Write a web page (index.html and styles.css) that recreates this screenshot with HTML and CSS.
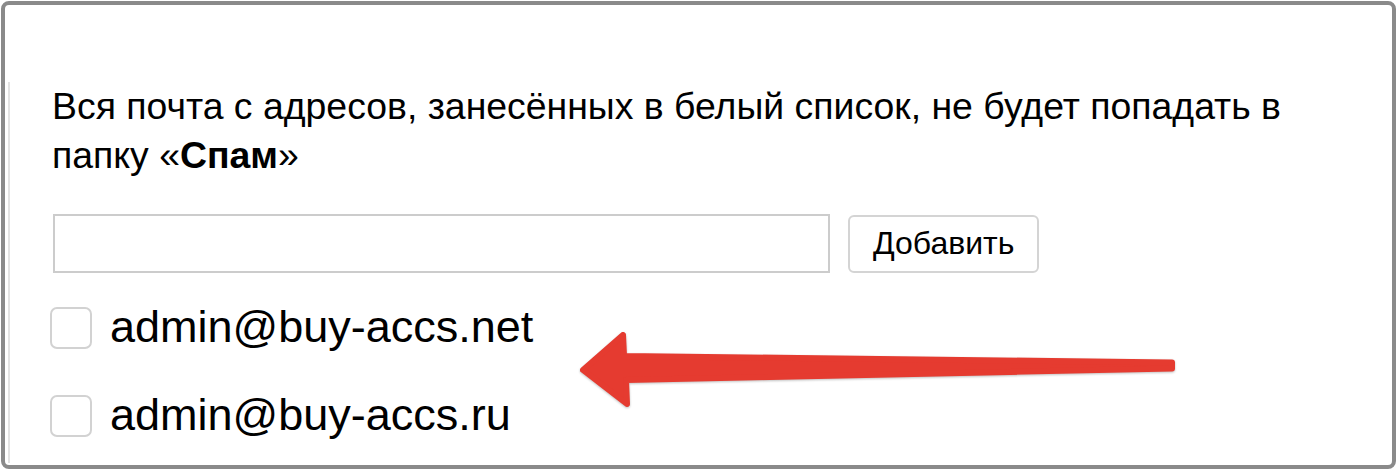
FILE: index.html
```html
<!DOCTYPE html>
<html lang="ru">
<head>
<meta charset="utf-8">
<title>Белый список</title>
<link rel="stylesheet" href="styles.css">
</head>
<body>
<div class="frame">
  <div class="panel">
    <p class="intro">Вся почта с адресов, занесённых в белый список, не будет попадать в папку «<b>Спам</b>»</p>
    <div class="add-form">
      <input class="addr-input" type="text" aria-label="Адрес">
      <button class="add-btn" type="button">Добавить</button>
    </div>
    <ul class="list">
      <li class="row"><span class="check"></span><span class="email">admin@buy-accs.net</span></li>
      <li class="row"><span class="check"></span><span class="email">admin@buy-accs.ru</span></li>
    </ul>
  </div>
</div>
<svg class="arrow" width="1399" height="472" viewBox="0 0 1399 472" aria-hidden="true">
  <polygon points="583,370 623,335 624,356 1172,362.5 1172,368.5 626,380 627,404" fill="#e53b30" stroke="#e53b30" stroke-width="6" stroke-linejoin="round"/>
</svg>
</body>
</html>
```
FILE: styles.css
```css
html, body {
  margin: 0;
  padding: 0;
  background: #ffffff;
}
body {
  width: 1399px;
  height: 472px;
  overflow: hidden;
  position: relative;
  font-family: "Liberation Sans", Arial, sans-serif;
  color: #000;
}
.frame {
  box-sizing: border-box;
  margin: 1px;
  width: 1395px;
  height: 468px;
  border: 4px solid #8a8a8a;
  border-radius: 8px;
  background: #fff;
  padding-top: 79px;
  overflow: hidden;
}
.panel {
  margin-left: 3px;
  height: 100%;
  border-left: 2px solid #e2e2e2;
  padding-left: 42px;
}
.intro {
  margin: -2px 0 0 0;
  font-size: 37.4px;
  line-height: 49px;
  width: 1300px;
}
.intro b {
  font-weight: bold;
}
.add-form {
  display: flex;
  align-items: center;
  gap: 18px;
  margin-top: 34px;
  margin-left: 1px;
}
.addr-input {
  box-sizing: border-box;
  width: 777px;
  height: 59px;
  border: 2px solid #cccccc;
  border-radius: 0;
  padding: 0 10px;
  font: 32px "Liberation Sans", Arial, sans-serif;
  background: #fff;
  outline: none;
}
.add-btn {
  box-sizing: border-box;
  height: 58px;
  padding: 0 23px;
  border: 2px solid #d4d4d4;
  border-radius: 6px;
  background: #fff;
  font: 32px "Liberation Sans", Arial, sans-serif;
  color: #000;
}
.list {
  list-style: none;
  margin: 11px 0 0 -2px;
  padding: 0;
}
.row {
  display: flex;
  align-items: center;
  gap: 18px;
  height: 88px;
}
.check {
  box-sizing: border-box;
  width: 42px;
  height: 42px;
  border: 2px solid #d2d2d2;
  border-radius: 7px;
  background: #fff;
  flex: none;
}
.email {
  font-size: 45px;
  line-height: 45px;
  padding-bottom: 4px;
}
.arrow {
  position: absolute;
  left: 0;
  top: 0;
  pointer-events: none;
  filter: drop-shadow(0 1px 1px rgba(0, 0, 0, 0.25));
}
```
